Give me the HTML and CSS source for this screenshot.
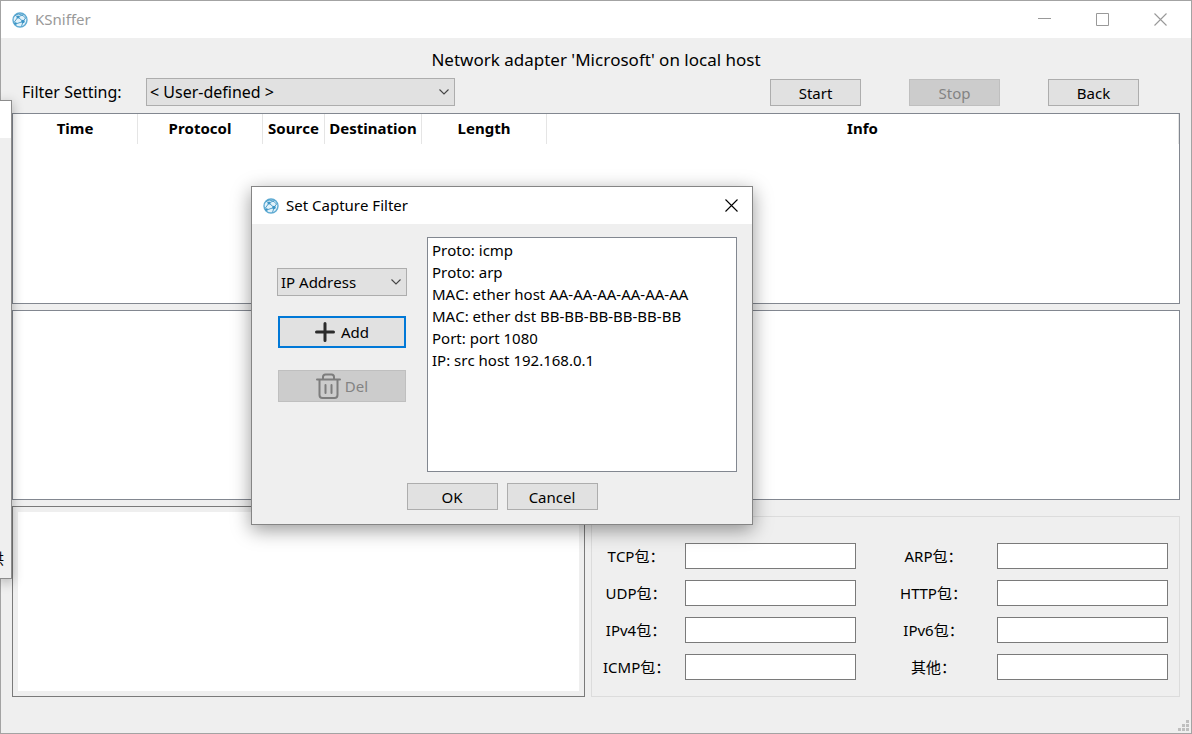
FILE: index.html
```html
<!DOCTYPE html>
<html lang="en">
<head>
<meta charset="utf-8">
<title>KSniffer</title>
<link rel="stylesheet" href="styles.css">
</head>
<body>
<svg class="defs" aria-hidden="true">
  <symbol id="globe" viewBox="0 0 16 16">
    <circle cx="8" cy="8" r="7" fill="#e3f2fa" stroke="#5fabd3" stroke-width="1.400"/>
    <path d="M3 3.200 6 5l5.500-2.600M6 5 2 10.500M6 5l5 4.500 3.200-4.300M11 9.500 3 12.200M11 9.500l-1.500 5M4 2.500Q9 1 13.500 6" fill="none" stroke="#4f9fca" stroke-width="1"/>
    <circle cx="6" cy="5" r="1.500" fill="#3d95c6"/><circle cx="11" cy="9.500" r="1.700" fill="#3d95c6"/><circle cx="3.500" cy="11.500" r="1.300" fill="#3d95c6"/>
  </symbol>
  <symbol id="chevron" viewBox="0 0 10 6"><path d="M.5.5 5 5 9.500.5" fill="none" stroke="#444" stroke-width="1.100"/></symbol>
  <symbol id="cross" viewBox="0 0 13 13"><path d="M.5.5l12 12M12.500.5l-12 12" fill="none" stroke="currentColor" stroke-width="1.100"/></symbol>
</svg>

<div class="window">
  <header class="titlebar titlebar-main">
    <svg class="app-icon"><use href="#globe"/></svg>
    <span class="title">KSniffer</span>
    <div class="window-controls">
      <button type="button" aria-label="Minimize"><svg viewBox="0 0 13 13"><path d="M0 5.500h13" stroke="currentColor"/></svg></button>
      <button type="button" aria-label="Maximize"><svg viewBox="0 0 13 13"><path d="M.5.5h12v12H.5z" fill="none" stroke="currentColor"/></svg></button>
      <button type="button" aria-label="Close"><svg><use href="#cross"/></svg></button>
    </div>
  </header>

  <main class="content">
    <h1 class="heading">Network adapter 'Microsoft' on local host</h1>
    <div class="toolbar">
      <label class="toolbar-label" for="filter">Filter Setting:</label>
      <div class="combo combo-filter">
        <select id="filter"><option>&lt; User-defined &gt;</option></select>
        <svg><use href="#chevron"/></svg>
      </div>
      <div class="actions">
        <button type="button" class="btn">Start</button>
        <button type="button" class="btn" disabled>Stop</button>
        <button type="button" class="btn">Back</button>
      </div>
    </div>

    <div class="panes">
      <section class="pane">
        <table class="packets">
          <thead>
            <tr>
              <th class="col-wide">Time</th>
              <th class="col-wide">Protocol</th>
              <th class="col-source">Source</th>
              <th class="col-dest">Destination</th>
              <th class="col-wide">Length</th>
              <th>Info</th>
            </tr>
          </thead>
        </table>
      </section>
      <section class="pane"></section>
      <section class="bottom">
        <div class="raw"><textarea aria-label="Packet data" readonly></textarea></div>
        <div class="stats">
          <label for="tcp">TCP包：</label><input id="tcp" type="text">
          <label class="second" for="arp">ARP包：</label><input id="arp" type="text">
          <label for="udp">UDP包：</label><input id="udp" type="text">
          <label class="second" for="http">HTTP包：</label><input id="http" type="text">
          <label for="ipv4">IPv4包：</label><input id="ipv4" type="text">
          <label class="second" for="ipv6">IPv6包：</label><input id="ipv6" type="text">
          <label for="icmp">ICMP包：</label><input id="icmp" type="text">
          <label class="second" for="other">其他：</label><input id="other" type="text">
        </div>
      </section>
    </div>
  </main>

  <footer class="statusbar">
    <svg class="grip" viewBox="0 0 11 11" fill="#bfbfbf"><path d="M8 0h3v3H8zM4 4h3v3H4zM8 4h3v3H8zM0 8h3v3H0zM4 8h3v3H4zM8 8h3v3H8z"/></svg>
  </footer>
</div>

<aside class="edge-window">
  <div class="edge-title"></div>
  <span class="edge-text">供</span>
</aside>

<div class="dialog" role="dialog" aria-labelledby="dialog-title">
  <header class="titlebar">
    <svg class="app-icon"><use href="#globe"/></svg>
    <span class="title" id="dialog-title">Set Capture Filter</span>
    <button type="button" class="dialog-close" aria-label="Close"><svg><use href="#cross"/></svg></button>
  </header>
  <div class="dialog-body">
    <div class="controls">
      <div class="combo">
        <select aria-label="Filter type"><option>IP Address</option></select>
        <svg><use href="#chevron"/></svg>
      </div>
      <button type="button" class="btn btn-icon btn-focus">
        <svg class="icon-add" viewBox="0 0 20 20"><path d="M10 1.500v17M1.500 10h17" stroke="#2b2b2b" stroke-width="3" stroke-linecap="round"/></svg>Add
      </button>
      <button type="button" class="btn btn-icon" disabled>
        <svg class="icon-del" viewBox="0 0 25 26" fill="none" stroke="#7d7d7d" stroke-width="2" stroke-linecap="round"><path d="M1 6.500h23M7 6V4q0-2.500 2.500-2.500h6Q18 1.500 18 4v2M3.500 7v15q0 3 3 3h12q3 0 3-3V7M9.500 12v8M15.500 12v8"/></svg>Del
      </button>
    </div>
    <ul class="filters">
      <li>Proto: icmp</li>
      <li>Proto: arp</li>
      <li>MAC: ether host AA-AA-AA-AA-AA-AA</li>
      <li>MAC: ether dst BB-BB-BB-BB-BB-BB</li>
      <li>Port: port 1080</li>
      <li>IP: src host 192.168.0.1</li>
    </ul>
  </div>
  <div class="dialog-actions">
    <button type="button" class="btn">OK</button>
    <button type="button" class="btn">Cancel</button>
  </div>
</div>
</body>
</html>
```
FILE: styles.css
```css
* { box-sizing: border-box; }

body {
  margin: 0;
  font: 15px/22px "Noto Sans", "Noto Sans CJK SC", sans-serif;
  font-kerning: none;
  color: #000;
  position: relative;
  overflow: hidden;
}

button, select, input, textarea { font: inherit; font-kerning: none; color: inherit; border-radius: 0; margin: 0; }
.defs { position: absolute; width: 0; height: 0; }

.window {
  min-height: 100vh;
  display: flex;
  flex-direction: column;
  background: #efefef;
  border: 1px solid #a3a3a3;
}

.titlebar {
  display: flex;
  align-items: center;
  height: 37px;
  padding-left: 11px;
  background: #fff;
}
.titlebar-main { color: #999; }
.title { padding-bottom: 2px; }
.app-icon { width: 16px; height: 16px; margin-right: 7px; }
.window-controls { display: flex; margin: 0 2px 0 auto; }
.window-controls button, .dialog-close {
  width: 58px;
  height: 36px;
  padding: 0;
  border: 0;
  background: none;
  display: grid;
  place-items: center;
}
.window-controls svg, .dialog-close svg { width: 13px; height: 13px; }
.dialog-close { width: 42px; margin-left: auto; }

.content { flex: 1; display: flex; flex-direction: column; padding: 11px 11px 0; }
.heading { margin: 0; font-size: 17px; line-height: 22px; font-weight: 400; text-align: center; }

.toolbar { display: flex; align-items: center; padding: 7px 41px 7px 10px; }
.toolbar-label { width: 124px; font-size: 16px; }
.combo { position: relative; width: 100%; }
.combo-filter { width: 309px; font-size: 16px; }
.combo select {
  display: block;
  appearance: none;
  width: 100%;
  height: 28px;
  padding: 0 4px 0 3px;
  background: #e1e1e1;
  border: 1px solid #adadad;
}
.combo svg { position: absolute; right: 6px; top: 11px; width: 10px; height: 6px; pointer-events: none; }
.actions { display: flex; gap: 48px; margin-left: auto; padding-top: 1px; }

.btn {
  width: 91px;
  height: 27px;
  padding: 0;
  background: #e1e1e1;
  border: 1px solid #adadad;
}
.btn:disabled { background: #ccc; border-color: #bfbfbf; color: #838383; }

.panes { flex: 1; display: grid; grid-template-rows: 1fr 1fr 1fr; gap: 6px; }
.pane { background: #fff; border: 1px solid #828790; }
.packets { width: 100%; table-layout: fixed; border-collapse: separate; border-spacing: 0; }
.packets th { height: 30px; padding: 0 0 2px; font-weight: 700; border-right: 1px solid #e5e5e5; }
.col-wide { width: 125px; }
.col-source { width: 62px; }
.col-dest { width: 97px; }

.bottom { display: grid; grid-template-columns: 573fr 589fr; gap: 6px; }
.raw { display: flex; padding: 5px; border: 1px solid #7a7a7a; }
.raw textarea { flex: 1; min-width: 0; border: 0; background: #fff; resize: none; }
.stats {
  display: grid;
  grid-template-columns: 82px 1fr 141px 1fr;
  grid-auto-rows: 26px;
  row-gap: 11px;
  align-items: center;
  margin-top: 10px;
  padding: 26px 11px 14px;
  border: 1px solid #dcdcdc;
}
.stats label { text-align: center; padding-right: 16px; white-space: nowrap; }
.stats .second { padding: 0 0 0 14px; }
.stats input { width: 100%; height: 26px; padding: 0 4px; background: #fff; border: 1px solid #7a7a7a; }

.statusbar { height: 36px; display: flex; justify-content: flex-end; align-items: flex-end; padding: 2px; }
.grip { width: 11px; height: 11px; }

/* Edge of a neighbouring window that lies over the main one */
.edge-window {
  position: absolute;
  left: 0;
  top: 100px;
  width: 12px;
  height: 479px;
  background: #efefef;
  border: 1px solid #8c8c8c;
  border-left: 0;
  box-shadow: 0 3px 12px rgba(0, 0, 0, .3);
}
.edge-title { height: 37px; background: #fff; }
.edge-text { position: absolute; right: 7px; top: 446px; }

.dialog {
  position: absolute;
  left: 251px;
  top: 186px;
  width: 502px;
  background: #efefef;
  border: 1px solid #858585;
  box-shadow: 0 5px 18px rgba(0, 0, 0, .4);
}
.dialog-body { display: flex; gap: 20px; padding: 13px 15px 11px 25px; }
.controls { width: 130px; display: flex; flex-direction: column; align-items: center; padding-top: 31px; }
.btn-icon { width: 128px; height: 32px; margin-top: 20px; display: flex; align-items: center; justify-content: center; gap: 6px; }
.btn-icon + .btn-icon { margin-top: 22px; gap: 4px; }
.btn-focus { border: 2px solid #0078d7; }
.icon-add { width: 20px; height: 20px; }
.icon-del { width: 25px; height: 26px; }
.filters { flex: 1; height: 235px; margin: 0; padding: 1px 4px; list-style: none; background: #fff; border: 1px solid #828790; white-space: nowrap; }
.dialog-actions { display: flex; justify-content: center; gap: 9px; padding-bottom: 14px; }
```
